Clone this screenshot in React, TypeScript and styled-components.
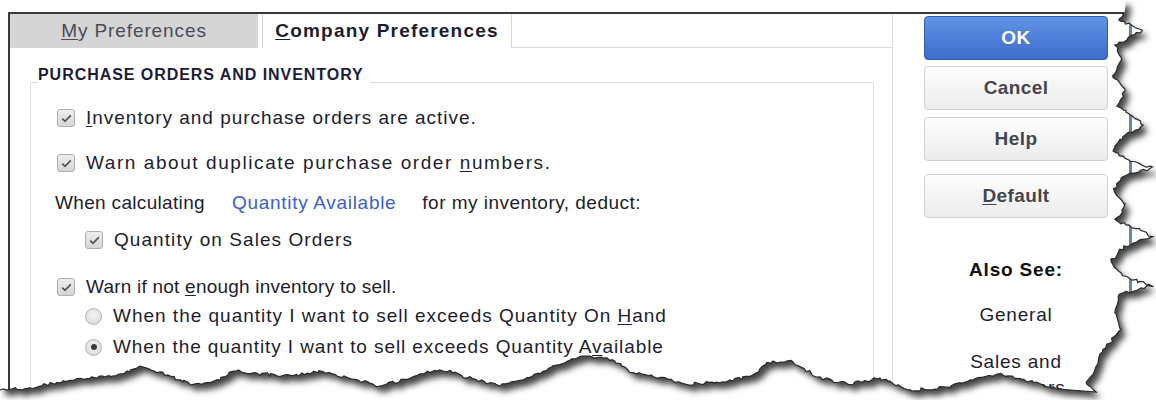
import React from 'react';
import styled, { createGlobalStyle } from 'styled-components';

const GlobalStyle = createGlobalStyle`
  html, body {
    margin: 0;
    padding: 0;
    background: #fff;
  }
  body {
    font-family: "Liberation Sans", Arial, sans-serif;
    color: #1d1d30;
  }
`;

const Page = styled.div`
  position: relative;
  width: 1156px;
  height: 400px;
  overflow: hidden;
  box-sizing: border-box;
  padding: 12px 0 0 8px;
`;

const Frame = styled.div`
  display: flex;
  width: 1140px;
  height: 400px;
  border-top: 2px solid #3a3a3a;
  border-left: 2px solid #3a3a3a;
  box-sizing: border-box;
`;

const PrefsPanel = styled.div`
  width: 882px;
  flex: none;
  border-right: 1px solid #dcdcdc;
  display: flex;
  flex-direction: column;
`;

const TabRow = styled.div`
  display: flex;
  height: 34px;
`;

const Tab = styled.div<{ $active?: boolean }>`
  width: ${({ $active }) => ($active ? '250px' : '248px')};
  margin-left: ${({ $active }) => ($active ? '4px' : '0')};
  display: flex;
  align-items: center;
  justify-content: center;
  box-sizing: border-box;
  font-size: 19px;
  letter-spacing: ${({ $active }) => ($active ? '1.2px' : '0.9px')};
  font-weight: ${({ $active }) => ($active ? 700 : 400)};
  color: ${({ $active }) => ($active ? '#1d1d30' : '#4a4a58')};
  background: ${({ $active }) => ($active ? '#fff' : '#d5d5d5')};
  border-left: ${({ $active }) => ($active ? '1px solid #d8d8d8' : 'none')};
  border-right: ${({ $active }) => ($active ? '1px solid #d8d8d8' : 'none')};
`;

const TabFiller = styled.div`
  flex: 1;
  border-bottom: 1px solid #d8d8d8;
`;

const PanelBody = styled.div`
  padding: 19px 18px 0 20px;
`;

const Group = styled.fieldset`
  margin: 0;
  padding: 0 0 40px 0;
  border: 1px solid #dedede;
  min-width: 0;
`;

const GroupTitle = styled.legend`
  margin-left: 7px;
  padding: 0 6px 14px 0;
  font-size: 16px;
  line-height: 16px;
  font-weight: 700;
  letter-spacing: 0.95px;
  color: #1c1c3a;
`;

const Row = styled.div<{ $mt: number; $indent?: number; $ls?: number }>`
  display: flex;
  align-items: center;
  height: 30px;
  margin-top: ${({ $mt }) => $mt}px;
  padding-left: ${({ $indent }) => 26 + ($indent || 0)}px;
  font-size: 19px;
  letter-spacing: ${({ $ls }) => $ls ?? 0.6}px;
  white-space: nowrap;
`;

const Label = styled.span`
  margin-left: 11px;
`;

const Phrase = styled.span<{ $ls: number }>`
  letter-spacing: ${({ $ls }) => $ls}px;
`;

const Key = styled.span`
  text-decoration: underline;
  text-underline-offset: 2px;
`;

const Box = styled.span`
  width: 18px;
  height: 18px;
  flex: none;
  box-sizing: border-box;
  border: 1px solid #aeaeae;
  border-radius: 3px;
  background: linear-gradient(#eeeeee, #d6d6d6);
  display: flex;
  align-items: center;
  justify-content: center;
`;

const Radio = styled.span<{ $on?: boolean }>`
  width: 17px;
  height: 17px;
  flex: none;
  box-sizing: border-box;
  border: 1px solid #b2b2b2;
  border-radius: 50%;
  background: radial-gradient(circle at 50% 40%, #f4f4f4, #d4d4d4);
  display: flex;
  align-items: center;
  justify-content: center;

  &::after {
    content: '';
    display: ${({ $on }) => ($on ? 'block' : 'none')};
    width: 6px;
    height: 6px;
    border-radius: 50%;
    background: #3a3a3a;
  }
`;

const Link = styled.span`
  color: #3b5fd0;
  font-size: 19px;
  letter-spacing: 0.7px;
  margin: 0 26px 0 27px;
`;

const SideColumn = styled.div`
  width: 239px;
  flex: none;
  box-sizing: border-box;
  border-right: 3px solid #6985a6;
  display: flex;
  flex-direction: column;
  padding: 2px 0 0 31px;
`;

const Button = styled.div<{ $primary?: boolean; $mt?: number }>`
  width: 184px;
  height: 44px;
  margin-top: ${({ $mt }) => $mt || 0}px;
  box-sizing: border-box;
  border-radius: 4px;
  display: flex;
  align-items: center;
  justify-content: center;
  font-size: 19px;
  font-weight: 700;
  letter-spacing: 0.4px;
  color: ${({ $primary }) => ($primary ? '#fff' : '#45454f')};
  border: 1px solid ${({ $primary }) => ($primary ? '#2f5eb8' : '#d2d2d2')};
  background: ${({ $primary }) =>
    $primary
      ? 'linear-gradient(#6193e4, #3d6ccb)'
      : 'linear-gradient(#fdfdfd, #ececec)'};
`;

const SeeAlso = styled.div`
  width: 184px;
  margin-top: 40px;
  display: flex;
  flex-direction: column;
  align-items: center;
  font-size: 19px;
  letter-spacing: 0.8px;
  color: #1d1d30;
`;

const SeeTitle = styled.div`
  font-weight: 700;
  color: #111;
  line-height: 24px;
`;

const SeeItem = styled.div<{ $mt: number }>`
  margin-top: ${({ $mt }) => $mt}px;
  line-height: 24px;
`;

const TearLayer = styled.svg`
  position: absolute;
  left: 0;
  top: 0;
  pointer-events: none;
`;

function CheckBox() {
  return (
    <Box>
      <svg width="11" height="9" viewBox="0 0 11 9">
        <path d="M1.2 4.6 L4 7.3 L9.8 1.3" fill="none" stroke="#555" strokeWidth="1.8" />
      </svg>
    </Box>
  );
}

// small seeded generator so the ragged edge is the same on every render
function rng(seed: number) {
  let s = seed;
  return () => {
    s = (s * 16807) % 2147483647;
    return s / 2147483647;
  };
}

const rightEdge: [number, number][] = [
  [1126, 12], [1118, 20], [1142, 30], [1115, 46], [1122, 60], [1112, 76],
  [1126, 90], [1118, 105], [1132, 117], [1144, 125], [1124, 136], [1112, 150],
  [1128, 160], [1152, 168], [1124, 176], [1112, 190], [1126, 205], [1116, 220],
  [1152, 236], [1124, 246], [1110, 262], [1122, 276], [1152, 286], [1120, 294],
  [1114, 312], [1120, 330], [1104, 350], [1094, 370], [1086, 384], [1096, 392],
];

const bottomEdge: [number, number][] = [
  [1060, 389], [1022, 380], [1000, 374], [970, 381], [940, 388], [910, 390],
  [880, 378], [850, 384], [820, 378], [790, 361], [768, 363], [750, 376],
  [720, 382], [690, 384], [660, 378], [630, 371], [610, 359], [582, 357],
  [556, 364], [530, 378], [500, 386], [470, 378], [440, 369], [410, 378],
  [380, 386], [350, 378], [320, 372], [290, 376], [260, 374], [235, 371],
  [215, 382], [190, 384], [160, 372], [140, 367], [120, 374], [90, 378],
  [60, 382], [30, 388], [0, 390],
];

function roughen(points: [number, number][], seed: number) {
  const rand = rng(seed);
  const out: string[] = [];
  for (let i = 0; i < points.length - 1; i++) {
    const [x1, y1] = points[i];
    const [x2, y2] = points[i + 1];
    const steps = Math.max(2, Math.round(Math.hypot(x2 - x1, y2 - y1) / 3));
    for (let k = 0; k < steps; k++) {
      const t = k / steps;
      const jx = (rand() - 0.5) * 3;
      const jy = (rand() - 0.5) * 3;
      out.push(`${(x1 + (x2 - x1) * t + jx).toFixed(1)},${(y1 + (y2 - y1) * t + jy).toFixed(1)}`);
    }
  }
  const last = points[points.length - 1];
  out.push(`${last[0]},${last[1]}`);
  return out;
}

function TornEdge() {
  const edge = [...roughen(rightEdge, 7), ...roughen(bottomEdge, 19)];
  const edgePath = 'M' + edge.join(' L');
  const paper = `M0,0 L1126,0 L${edge.join(' L')} Z`;
  const outside = `M0,0 H1156 V400 H0 Z ${paper}`;
  return (
    <TearLayer width="1156" height="400" viewBox="0 0 1156 400">
      <defs>
        <clipPath id="outside">
          <path d={outside} clipRule="evenodd" />
        </clipPath>
        <filter id="soft" x="-5%" y="-5%" width="110%" height="110%">
          <feGaussianBlur stdDeviation="3" />
        </filter>
      </defs>
      <g clipPath="url(#outside)">
        <rect width="1156" height="400" fill="#fff" />
        <path d={paper} transform="translate(5 6)" fill="#454545" filter="url(#soft)" />
      </g>
      <path d={edgePath} fill="none" stroke="#2a2a2a" strokeWidth="1.2" />
    </TearLayer>
  );
}

export default function App() {
  return (
    <>
      <GlobalStyle />
      <Page>
        <Frame>
          <PrefsPanel>
            <TabRow>
              <Tab>
                <Key>M</Key>y Preferences
              </Tab>
              <Tab $active>
                <Key>C</Key>ompany Preferences
              </Tab>
              <TabFiller />
            </TabRow>
            <PanelBody>
              <Group>
                <GroupTitle>PURCHASE ORDERS AND INVENTORY</GroupTitle>
                <Row $mt={6} $ls={0.98}>
                  <CheckBox />
                  <Label>
                    <Key>I</Key>nventory and purchase orders are active.
                  </Label>
                </Row>
                <Row $mt={15} $ls={1.57}>
                  <CheckBox />
                  <Label>
                    Warn about duplicate purchase order <Key>n</Key>umbers.
                  </Label>
                </Row>
                <Row $mt={10} $indent={-2}>
                  <Phrase $ls={0.33}>When calculating</Phrase>
                  <Link>Quantity Available</Link>
                  <Phrase $ls={0.48}>for my inventory, deduct:</Phrase>
                </Row>
                <Row $mt={7} $indent={28} $ls={1.07}>
                  <CheckBox />
                  <Label>Quantity on Sales Orders</Label>
                </Row>
                <Row $mt={17} $ls={0.22}>
                  <CheckBox />
                  <Label>
                    Warn if not <Key>e</Key>nough inventory to sell.
                  </Label>
                </Row>
                <Row $mt={-1} $indent={28} $ls={0.99}>
                  <Radio />
                  <Label>
                    When the quantity I want to sell exceeds Quantity On <Key>H</Key>and
                  </Label>
                </Row>
                <Row $mt={1} $indent={28} $ls={0.91}>
                  <Radio $on />
                  <Label>
                    When the quantity I want to sell exceeds Quantity A<Key>v</Key>ailable
                  </Label>
                </Row>
              </Group>
            </PanelBody>
          </PrefsPanel>
          <SideColumn>
            <Button $primary>OK</Button>
            <Button $mt={6}>Cancel</Button>
            <Button $mt={7}>Help</Button>
            <Button $mt={13}>
              <Key>D</Key>efault
            </Button>
            <SeeAlso>
              <SeeTitle>Also See:</SeeTitle>
              <SeeItem $mt={21}>General</SeeItem>
              <SeeItem $mt={23}>Sales and</SeeItem>
              <SeeItem $mt={2}>Customers</SeeItem>
            </SeeAlso>
          </SideColumn>
        </Frame>
        <TornEdge />
      </Page>
    </>
  );
}
